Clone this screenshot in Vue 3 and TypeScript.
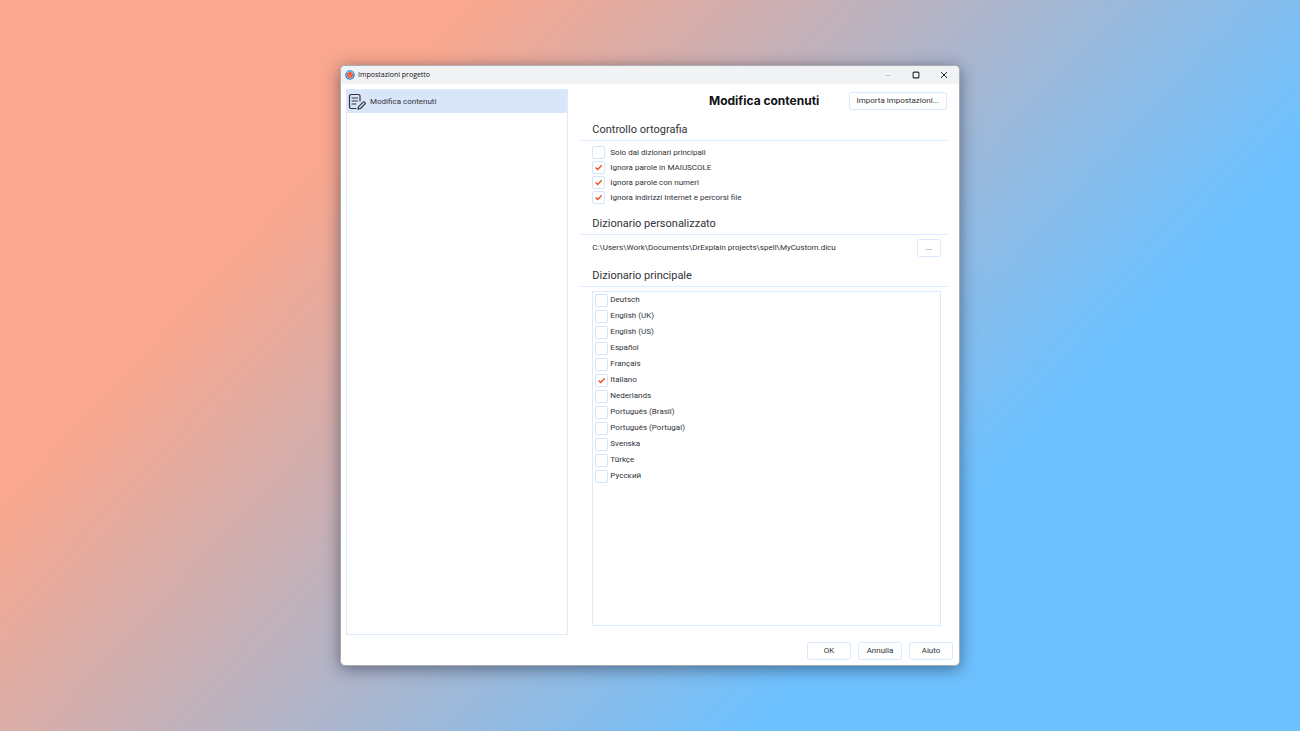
<script setup lang="ts">
import { ref } from 'vue'

interface Option {
  id: string
  label: string
  checked: boolean
}

const spelling = ref<Option[]>([
  { id: 'main-only', label: 'Solo dai dizionari principali', checked: false },
  { id: 'uppercase', label: 'Ignora parole in MAIUSCOLE', checked: true },
  { id: 'numbers', label: 'Ignora parole con numeri', checked: true },
  { id: 'addresses', label: 'Ignora indirizzi Internet e percorsi file', checked: true },
])

const dictionaries = ref<Option[]>([
  { id: 'de', label: 'Deutsch', checked: false },
  { id: 'en-gb', label: 'English (UK)', checked: false },
  { id: 'en-us', label: 'English (US)', checked: false },
  { id: 'es', label: 'Español', checked: false },
  { id: 'fr', label: 'Français', checked: false },
  { id: 'it', label: 'Italiano', checked: true },
  { id: 'nl', label: 'Nederlands', checked: false },
  { id: 'pt-br', label: 'Português (Brasil)', checked: false },
  { id: 'pt-pt', label: 'Português (Portugal)', checked: false },
  { id: 'sv', label: 'Svenska', checked: false },
  { id: 'tr', label: 'Türkçe', checked: false },
  { id: 'ru', label: 'Русский', checked: false },
])

const customPath = 'C:\\Users\\Work\\Documents\\DrExplain projects\\spell\\MyCustom.dicu'
const actions = ['OK', 'Annulla', 'Aiuto']
</script>

<template>
  <main class="desktop">
    <div class="window" role="dialog" aria-labelledby="window-title">
      <header class="titlebar">
        <svg class="app-icon" viewBox="0 0 20 20" aria-hidden="true">
          <circle cx="10" cy="10" r="9.5" fill="#1683dc" />
          <path d="M3 5A9 9 0 0 1 17 4" fill="none" stroke="#5bb8f5" stroke-width="2" />
          <circle cx="10" cy="10" r="6.8" fill="#f4f0f2" />
          <circle cx="10" cy="10" r="6" fill="#f0522f" />
          <path d="M7 10.500l2.200 1.800 3.800-4" fill="none" stroke="#ffc3b3" stroke-width="1.500" />
        </svg>
        <span id="window-title" class="window-title">Impostazioni progetto</span>
        <div class="window-controls">
          <button type="button" class="control" aria-label="Riduci a icona" disabled>
            <svg viewBox="0 0 10 10"><path d="M2 5.500h6" stroke="#c9cbcd" /></svg>
          </button>
          <button type="button" class="control" aria-label="Ingrandisci">
            <svg viewBox="0 0 10 10">
              <rect x="2.100" y="2.100" width="5.800" height="5.800" rx="1" fill="none" stroke="#25272a" stroke-width="1.100" />
            </svg>
          </button>
          <button type="button" class="control" aria-label="Chiudi">
            <svg viewBox="0 0 10 10"><path d="M2 2l6 6M8 2l-6 6" stroke="#25272a" stroke-width="1" /></svg>
          </button>
        </div>
      </header>

      <div class="body">
        <nav class="sidebar">
          <button type="button" class="nav-item" aria-current="page">
            <svg class="nav-icon" viewBox="0 0 18 18" fill="none" stroke="#30343c" stroke-linecap="round" stroke-linejoin="round" aria-hidden="true">
              <path d="M12 8V3.200A1.700 1.700 0 0 0 10.300 1.500H3.200A1.700 1.700 0 0 0 1.500 3.200v10.600A1.700 1.700 0 0 0 3.200 15.500H8" stroke-width="1.200" />
              <path d="M4 5h5.500M4 8h5.500M4 11h4" stroke-width="1.100" />
              <path d="M10 16.200l.6-2.600 4.300-4.300a1.250 1.250 0 0 1 1.900 1.900l-4.300 4.300z" stroke-width="1.200" />
            </svg>
            Modifica contenuti
          </button>
        </nav>

        <div class="pane">
          <div class="pane-head">
            <h1>Modifica contenuti</h1>
            <button type="button" class="btn import">Importa impostazioni...</button>
          </div>

          <section>
            <h2>Controllo ortografia</h2>
            <ul class="content options">
              <li v-for="item in spelling" :key="item.id">
                <label>
                  <span class="box">
                    <input v-model="item.checked" type="checkbox" />
                    <svg v-if="item.checked" viewBox="0 0 13 13" aria-hidden="true"><path d="M3.500 6.500l2.200 2.100 4-4.300" /></svg>
                  </span>
                  {{ item.label }}
                </label>
              </li>
            </ul>
          </section>

          <section>
            <h2>Dizionario personalizzato</h2>
            <div class="content path-row">
              <span>{{ customPath }}</span>
              <button type="button" class="btn browse" aria-label="Sfoglia">...</button>
            </div>
          </section>

          <section class="grow">
            <h2>Dizionario principale</h2>
            <div class="content grow">
              <ul class="dictionaries">
                <li v-for="item in dictionaries" :key="item.id">
                  <label>
                    <span class="box">
                      <input v-model="item.checked" type="checkbox" />
                      <svg v-if="item.checked" viewBox="0 0 13 13" aria-hidden="true"><path d="M3.500 6.500l2.200 2.100 4-4.300" /></svg>
                    </span>
                    {{ item.label }}
                  </label>
                </li>
              </ul>
            </div>
          </section>
        </div>
      </div>

      <footer class="actions">
        <button v-for="action in actions" :key="action" type="button" class="btn action">{{ action }}</button>
      </footer>
    </div>
  </main>
</template>

<style>
body {
  margin: 0;
}
</style>

<style scoped>
* {
  box-sizing: border-box;
}

.desktop {
  display: flex;
  justify-content: center;
  min-height: 100vh;
  padding: 65px 24px;
  background: linear-gradient(133deg, #f9a78e 24%, #6ec1ff 72%);
  font-family: Roboto, Inter, "Liberation Sans", sans-serif;
  font-size: 8px;
  line-height: 16px;
  color: #303238;
}

.window {
  display: flex;
  flex-direction: column;
  width: 100%;
  max-width: 620px;
  overflow: hidden;
  border: 1px solid #a9acb1;
  border-radius: 5px;
  background: #fff;
  box-shadow: 0 3px 16px rgba(20, 25, 45, 0.5);
}

button {
  margin: 0;
  padding: 0;
  border: 0;
  background: none;
  font: inherit;
  color: inherit;
}

.titlebar {
  display: flex;
  align-items: center;
  height: 18px;
  padding: 0 1px 0 4px;
  background: #f1f2f4;
}

.app-icon {
  width: 10px;
  height: 10px;
}

.window-title {
  margin-left: 3px;
  font-family: "Open Sans", "Noto Sans", sans-serif;
  font-size: 7px;
  color: #111;
}

.window-controls {
  display: flex;
  margin-left: auto;
}

.control {
  display: grid;
  place-items: center;
  width: 28px;
  height: 18px;
}

.control svg {
  width: 10px;
  height: 10px;
}

.body {
  display: flex;
  flex: 1;
  gap: 13px;
  padding: 5px 12px 0 5px;
}

.sidebar {
  flex: 0 0 37%;
  border: 1px solid #dbeafc;
}

.nav-item {
  display: flex;
  align-items: center;
  gap: 4px;
  width: 100%;
  height: 23px;
  padding-left: 1px;
  background: #d9e6f9;
}

.nav-icon {
  width: 18px;
  height: 18px;
}

.pane {
  display: flex;
  flex: 1;
  flex-direction: column;
  gap: 10px;
  min-width: 0;
  padding-bottom: 9px;
}

.pane-head {
  display: grid;
  grid-template-columns: 1fr auto 1fr;
  align-items: center;
  padding: 3px 0 1px;
}

h1 {
  grid-column: 2;
  margin: 0;
  font-family: Inter, "Liberation Sans", sans-serif;
  font-size: 12px;
  font-weight: 700;
  line-height: 16px;
  color: #111216;
}

.btn {
  height: 18px;
  border: 1px solid #d9e8fc;
  border-radius: 3px;
  background: #fff;
}

.import {
  justify-self: end;
  padding: 0 7px;
}

h2 {
  margin: 0;
  padding: 0 11px 1px;
  border-bottom: 1px solid #dbeafc;
  font-size: 11px;
  font-weight: 400;
  line-height: 18px;
}

ul {
  margin: 0;
  padding: 0;
  list-style: none;
}

.content {
  padding: 4px 6px 0 11px;
}

.options label {
  display: flex;
  align-items: center;
  gap: 5px;
  height: 15px;
}

.path-row {
  display: flex;
  align-items: center;
  justify-content: space-between;
}

.browse {
  width: 24px;
}

.grow {
  display: flex;
  flex: 1;
  flex-direction: column;
}

.dictionaries {
  flex: 1;
  padding-left: 2px;
  border: 1px solid #dbeafc;
}

.dictionaries label {
  display: flex;
  align-items: center;
  gap: 2px;
  height: 16px;
}

.box {
  display: grid;
  width: 13px;
  height: 13px;
}

.box > * {
  grid-area: 1 / 1;
}

.box input {
  appearance: none;
  width: 13px;
  height: 13px;
  margin: 0;
  border: 1px solid #d3e4fb;
  border-radius: 2px;
  background: #fff;
}

.box svg {
  z-index: 1;
  width: 13px;
  height: 13px;
  fill: none;
  stroke: #f04e23;
  stroke-width: 1.4;
  pointer-events: none;
}

.actions {
  display: flex;
  justify-content: flex-end;
  gap: 7px;
  padding: 7px 6px 5px;
}

.action {
  width: 44px;
}
</style>
